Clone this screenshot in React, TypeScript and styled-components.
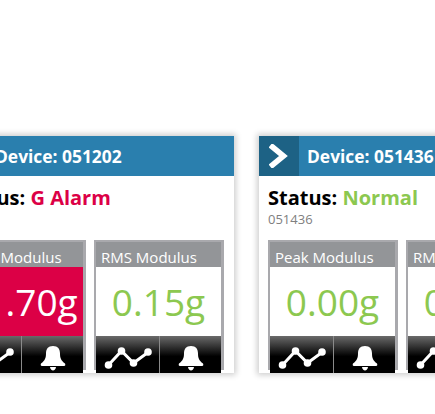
import React from "react";
import styled, { createGlobalStyle } from "styled-components";

const Global = createGlobalStyle`
  html, body { margin: 0; padding: 0; background: #fff; overflow: hidden; }
  body { width: 435px; height: 414px; font-family: "Open Sans", sans-serif; }
`;

const Row = styled.div`
  display: flex;
  gap: 25px;
  width: 600px;
  margin-left: -53px;
  padding-top: 136px;
`;

const Card = styled.section`
  flex: none;
  width: 287px;
  height: 237px;
  background: #fff;
  box-shadow: 0 0 6px 2px rgba(0, 0, 0, 0.2);
  display: flex;
  flex-direction: column;
`;

const Header = styled.header`
  display: flex;
  align-items: center;
  height: 40px;
  background: #2a7fae;
  color: #fff;
  font-size: 17.4px;
  font-weight: 700;
`;

const Chevron = styled.div`
  width: 40px;
  height: 40px;
  background: #1d6285;
  display: flex;
  align-items: center;
  justify-content: center;
`;

const Title = styled.span`
  margin-left: 8px;
`;

const StatusBlock = styled.div`
  height: 64px;
  padding: 10px 10px 0 9px;
  box-sizing: border-box;
`;

const Status = styled.div`
  font-size: 20px;
  font-weight: 700;
  line-height: 24px;
  color: #000;
`;

const StatusValue = styled.span<{ $color: string }>`
  color: ${(p) => p.$color};
`;

const Serial = styled.div`
  font-size: 13px;
  line-height: 18px;
  color: #808080;
`;

const Tiles = styled.div`
  display: flex;
  gap: 8px;
  padding: 0 10px 0 9px;
`;

const Tile = styled.div`
  width: 130px;
  height: 130px;
  box-sizing: border-box;
  border: solid #a9a9ad;
  border-width: 2px 3px 0 2px;
  display: flex;
  flex-direction: column;
`;

const TileLabel = styled.div`
  height: 25px;
  flex: none;
  background: #939598;
  color: #fff;
  font-size: 15px;
  line-height: 30px;
  padding-left: 5px;
  overflow: hidden;
  white-space: nowrap;
`;

const TileValue = styled.div<{ $alarm?: boolean }>`
  height: 69px;
  flex: none;
  display: flex;
  align-items: center;
  justify-content: center;
  font-size: 37px;
  background: ${(p) => (p.$alarm ? "#dc0046" : "#fff")};
  color: ${(p) => (p.$alarm ? "#fff" : "#8cc850")};
`;

const Footer = styled.div`
  display: flex;
  height: 37px;
  flex: none;
  background: linear-gradient(#6a6a6a 0%, #000 55%, #000 100%);
`;

const FootButton = styled.div<{ $wide?: boolean }>`
  flex: ${(p) => (p.$wide ? "0 0 63px" : "1")};
  display: flex;
  align-items: flex-end;
  justify-content: center;
  ${(p) => (p.$wide ? "border-right: 1px solid #8a8a8a;" : "")}
`;

const ChevronIcon = () => (
  <svg width="20" height="24" viewBox="0 0 20 24">
    <path d="M3.5 3 L14.5 12 L3.5 21" fill="none" stroke="#fff" strokeWidth="5.5" strokeLinecap="square" strokeLinejoin="miter" />
  </svg>
);

const TrendIcon = () => (
  <svg width="48" height="28" viewBox="0 0 48 28">
    <path d="M4.5 20 L17.5 6 L29.5 18 L44.5 7" fill="none" stroke="#fff" strokeWidth="3" />
    <circle cx="4.5" cy="20" r="3.8" fill="#fff" />
    <circle cx="17.5" cy="6" r="3.8" fill="#fff" />
    <circle cx="29.5" cy="18" r="3.8" fill="#fff" />
    <circle cx="44" cy="7" r="3.8" fill="#fff" />
  </svg>
);

const BellIcon = () => (
  <svg width="28" height="28" viewBox="0 0 28 28">
    <path d="M14 1 C9 1 7 4 7 8.5 C7 13 6 15.5 2 18.5 C1.5 19.5 1.5 21 3 21 L25 21 C26.5 21 26.5 19.5 26 18.5 C22 15.5 21 13 21 8.5 C21 4 19 1 14 1 Z" fill="#fff" />
    <path d="M11 22 L17 22 C16.5 26.5 11.5 26.5 11 22 Z" fill="#fff" />
  </svg>
);

const TileView = ({ label, value, alarm }: { label: string; value: string; alarm?: boolean }) => (
  <Tile>
    <TileLabel>{label}</TileLabel>
    <TileValue $alarm={alarm}>{value}</TileValue>
    <Footer>
      <FootButton $wide>
        <TrendIcon />
      </FootButton>
      <FootButton>
        <BellIcon />
      </FootButton>
    </Footer>
  </Tile>
);

export default function App() {
  return (
    <>
      <Global />
      <Row>
        <Card>
          <Header>
            <Chevron>
              <ChevronIcon />
            </Chevron>
            <Title>Device: 051202</Title>
          </Header>
          <StatusBlock>
            <Status>
              Status: <StatusValue $color="#dc0046">G Alarm</StatusValue>
            </Status>
          </StatusBlock>
          <Tiles>
            <TileView label="Peak Modulus" value="11.70g" alarm />
            <TileView label="RMS Modulus" value="0.15g" />
          </Tiles>
        </Card>
        <Card>
          <Header>
            <Chevron>
              <ChevronIcon />
            </Chevron>
            <Title>Device: 051436</Title>
          </Header>
          <StatusBlock>
            <Status>
              Status: <StatusValue $color="#8cc850">Normal</StatusValue>
            </Status>
            <Serial>051436</Serial>
          </StatusBlock>
          <Tiles>
            <TileView label="Peak Modulus" value="0.00g" />
            <TileView label="RMS Modulus" value="0.15g" />
          </Tiles>
        </Card>
      </Row>
    </>
  );
}
